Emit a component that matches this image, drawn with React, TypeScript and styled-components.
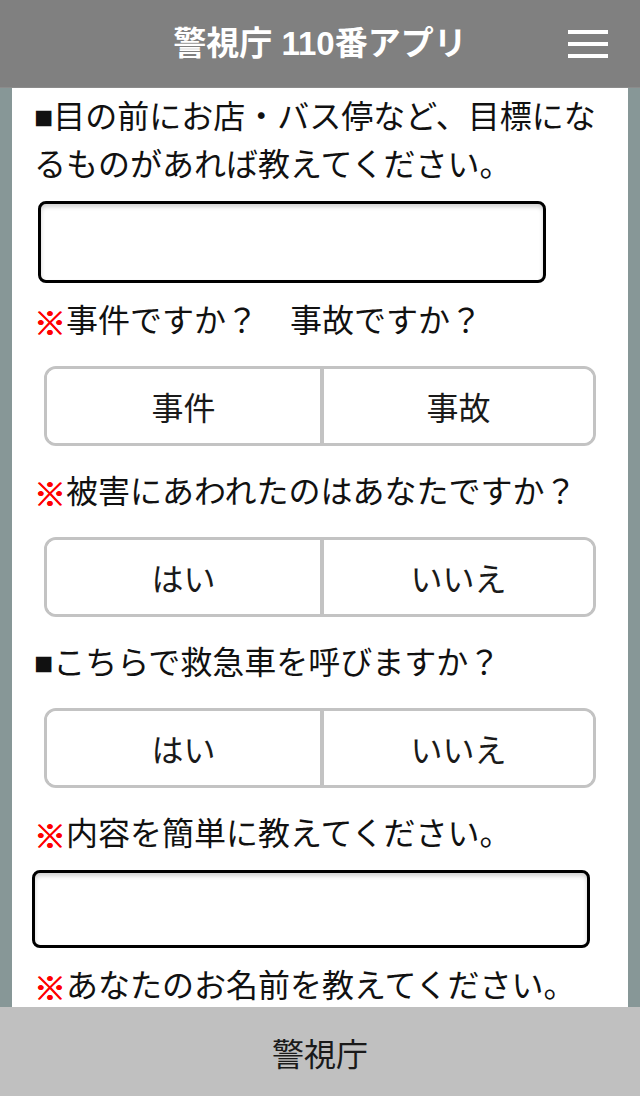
import React from "react";
import styled, { createGlobalStyle } from "styled-components";

const GlobalStyle = createGlobalStyle`
  html, body {
    margin: 0;
    padding: 0;
    height: 100%;
  }
  body {
    font-family: "Liberation Sans", "Noto Sans CJK JP", sans-serif;
    color: #111;
    background: #879797;
  }
  #root {
    height: 100%;
  }
  * { box-sizing: border-box; }
`;

const Screen = styled.div`
  height: 100vh;
  display: flex;
  flex-direction: column;
  overflow: hidden;
`;

const Header = styled.header`
  flex: 0 0 88px;
  display: grid;
  grid-template-columns: 1fr auto 1fr;
  align-items: center;
  background: #808080;
  border-bottom: 1px solid #8c8c8c;
`;

const Title = styled.h1`
  grid-column: 2;
  margin: 0;
  font-size: 33px;
  font-weight: bold;
  color: #fff;
  letter-spacing: 0;
  line-height: 1;
`;

const MenuButton = styled.button`
  grid-column: 3;
  justify-self: end;
  margin-right: 32px;
  padding: 0;
  border: 0;
  background: none;
  display: flex;
  flex-direction: column;
  gap: 8px;
  cursor: pointer;
`;

const MenuBar = styled.span`
  display: block;
  width: 40px;
  height: 4px;
  background: #fff;
`;

const Main = styled.main`
  flex: 1 1 auto;
  overflow: hidden;
  background: #879797;
  padding: 0 12px;
`;

const Panel = styled.div`
  background: #fff;
  min-height: 100%;
  padding: 5px 22px 0;
`;

const Label = styled.p`
  margin: 0;
  font-size: 32px;
  line-height: 48px;
  color: #111;
`;

const Required = styled.span`
  position: relative;
  top: 3px;
  color: #ff0000;
  font-weight: 900;
  text-shadow: 0.6px 0 0 #ff0000, -0.6px 0 0 #ff0000;
`;

const TextInput = styled.input<{ $left: number; $width: number; $height: number }>`
  display: block;
  margin: 12px 0 14px ${(p) => p.$left}px;
  width: ${(p) => p.$width}px;
  height: ${(p) => p.$height}px;
  border: 3px solid #000;
  border-radius: 8px;
  background: #fff;
  box-shadow: inset 0 3px 4px rgba(0, 0, 0, 0.18);
  font-size: 28px;
  padding: 0 10px;
  outline: none;
`;

const Segmented = styled.div`
  display: grid;
  grid-template-columns: 1fr 1fr;
  margin: 21px 10px 22px;
  height: 80px;
  border: 3px solid #c3c3c3;
  border-radius: 12px;
  overflow: hidden;
  background: #fff;
`;

const SegmentButton = styled.button`
  border: 0;
  background: #fff;
  font-family: inherit;
  font-size: 32px;
  color: #1a1a1a;
  padding: 0;
  cursor: pointer;
  & + & {
    border-left: 4px solid #c3c3c3;
  }
`;

const Footer = styled.footer`
  flex: 0 0 89px;
  display: flex;
  align-items: center;
  justify-content: center;
  background: #c0c0c0;
  font-size: 32px;
  color: #1a1a1a;
`;

function Choice({ options }: { options: string[] }) {
  return (
    <Segmented>
      {options.map((o) => (
        <SegmentButton key={o} type="button">
          {o}
        </SegmentButton>
      ))}
    </Segmented>
  );
}

export default function App() {
  return (
    <>
      <GlobalStyle />
      <Screen>
        <Header>
          <Title>警視庁 110番アプリ</Title>
          <MenuButton type="button" aria-label="メニュー">
            <MenuBar />
            <MenuBar />
            <MenuBar />
          </MenuButton>
        </Header>
        <Main>
          <Panel>
            <Label>■目の前にお店・バス停など、目標になるものがあれば教えてください。</Label>
            <TextInput $left={4} $width={508} $height={82} />
            <Label>
              <Required>※</Required>事件ですか？　事故ですか？
            </Label>
            <Choice options={["事件", "事故"]} />
            <Label>
              <Required>※</Required>被害にあわれたのはあなたですか？
            </Label>
            <Choice options={["はい", "いいえ"]} />
            <Label>■こちらで救急車を呼びますか？</Label>
            <Choice options={["はい", "いいえ"]} />
            <Label>
              <Required>※</Required>内容を簡単に教えてください。
            </Label>
            <TextInput $left={-2} $width={558} $height={78} />
            <Label>
              <Required>※</Required>あなたのお名前を教えてください。
            </Label>
          </Panel>
        </Main>
        <Footer>警視庁</Footer>
      </Screen>
    </>
  );
}
